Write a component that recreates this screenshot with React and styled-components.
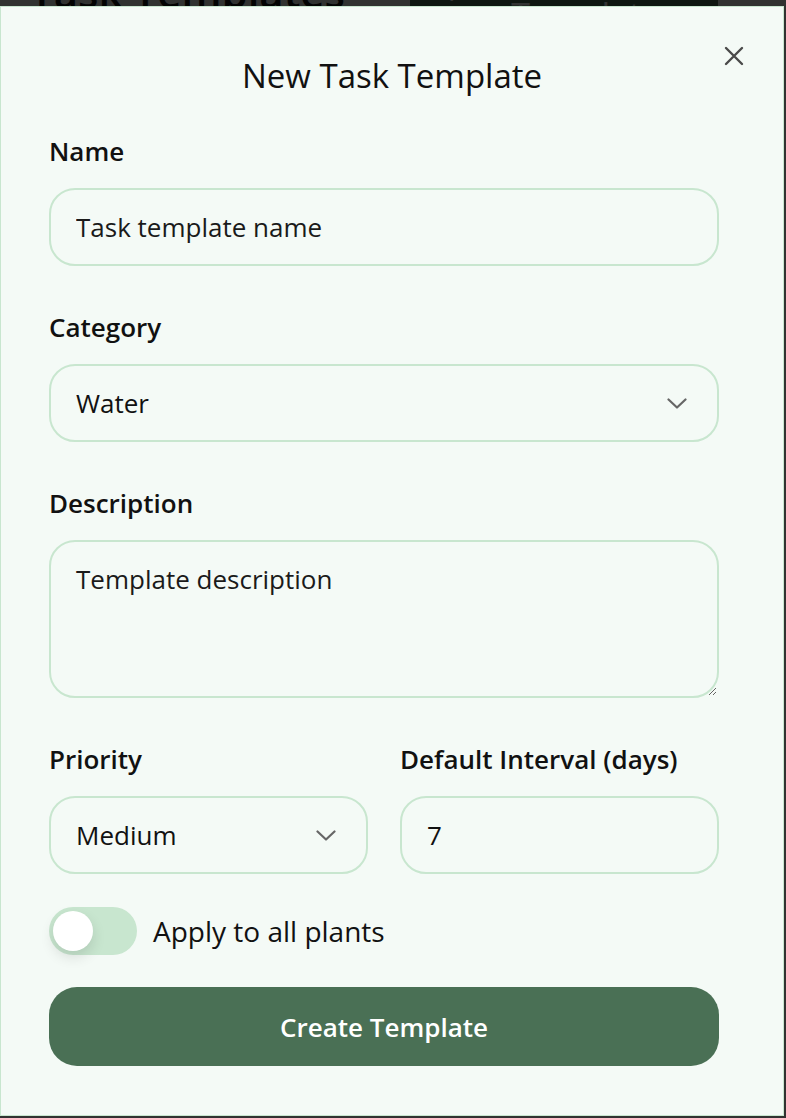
import React, { useState } from "react";
import styled, { createGlobalStyle } from "styled-components";

const GlobalStyle = createGlobalStyle`
  html, body {
    margin: 0;
    padding: 0;
    background: #f4faf6;
    font-family: "Open Sans", "Noto Sans", sans-serif;
    color: #111;
  }
  * { box-sizing: border-box; }
`;

const Page = styled.div`
  min-height: 1118px;
  padding: 0 68px 0 30px;
`;

const PageHeader = styled.header`
  display: flex;
  justify-content: space-between;
  align-items: center;
  margin-top: -44px;
`;

const PageTitle = styled.h1`
  margin: 0;
  font-size: 42px;
  font-weight: 600;
  line-height: 52px;
`;

const NewButton = styled.button`
  display: flex;
  align-items: center;
  gap: 24px;
  width: 308px;
  height: 72px;
  padding: 0 32px;
  border: 0;
  background: #4a7055;
  color: #fff;
  font: 500 34px "Open Sans", sans-serif;
`;

const Overlay = styled.div`
  position: fixed;
  inset: 0;
  background: rgba(0, 0, 0, 0.8);
  padding-top: 6px;
`;

const Modal = styled.div`
  position: relative;
  width: 784px;
  height: 1110px;
  background: #f4faf6;
  border: 1px solid #c8e6cf;
  padding: 47px 64px 0 48px;
`;

const CloseButton = styled.button`
  position: absolute;
  top: 38px;
  right: 38px;
  width: 22px;
  height: 22px;
  padding: 0;
  border: 0;
  background: none;
  display: flex;
  align-items: center;
  justify-content: center;
  cursor: pointer;
`;

const Title = styled.h2`
  margin: 0 -16px 35px 0;
  text-align: center;
  font-size: 33px;
  font-weight: 500;
  line-height: 44px;
`;

const Fields = styled.div`
  display: flex;
  flex-direction: column;
  gap: 43px;
`;

const Field = styled.label`
  display: flex;
  flex-direction: column;
  gap: 19px;
  min-width: 0;
`;

const Label = styled.span`
  font-size: 26px;
  font-weight: 600;
  line-height: 36px;
`;

const controlBase = `
  width: 100%;
  border: 2px solid #c8e6cf;
  border-radius: 26px;
  background: #f4faf6;
  color: #111;
  font-family: "Open Sans", "Noto Sans", sans-serif;
  font-size: 26px;
  outline: none;
  &::placeholder { color: #1a1a1a; opacity: 1; }
`;

const TextInput = styled.input`
  ${controlBase}
  height: 78px;
  padding: 0 25px;
`;

const TextArea = styled.textarea`
  ${controlBase}
  height: 158px;
  padding: 19px 25px;
  line-height: 36px;
  resize: vertical;
`;

const SelectWrap = styled.div`
  position: relative;
`;

const Select = styled.select`
  ${controlBase}
  height: 78px;
  padding: 0 60px 0 25px;
  appearance: none;
`;

const Chevron = styled.svg`
  position: absolute;
  right: ${(p) => p.$right}px;
  top: 34px;
  pointer-events: none;
`;

const Row = styled.div`
  display: grid;
  grid-template-columns: 1fr 1fr;
  gap: 32px;
`;

const ToggleRow = styled.label`
  display: flex;
  align-items: center;
  gap: 16px;
  margin-top: 33px;
  cursor: pointer;
`;

const Track = styled.span`
  position: relative;
  width: 88px;
  height: 48px;
  border-radius: 24px;
  background: #c8e6cf;
  flex-shrink: 0;
`;

const Knob = styled.span`
  position: absolute;
  top: 4px;
  left: ${(p) => (p.$on ? 44 : 4)}px;
  width: 40px;
  height: 40px;
  border-radius: 50%;
  background: #fff;
  box-shadow: 0 6px 14px rgba(0, 0, 0, 0.12);
`;

const ToggleText = styled.span`
  font-size: 28px;
  font-weight: 500;
  line-height: 36px;
`;

const SubmitButton = styled.button`
  width: 100%;
  height: 79px;
  margin-top: 32px;
  border: 0;
  border-radius: 28px;
  background: #4a7055;
  color: #fff;
  font-family: "Open Sans", "Noto Sans", sans-serif;
  font-size: 26px;
  font-weight: 600;
  cursor: pointer;
`;

const ChevronIcon = ({ right }) => (
  <Chevron $right={right} width="20" height="11" viewBox="0 0 20 11" fill="none">
    <path d="M1.5 1.5 L10 9.5 L18.5 1.5" stroke="#666" strokeWidth="2.2" strokeLinecap="round" strokeLinejoin="round" />
  </Chevron>
);

export default function App() {
  const [applyAll, setApplyAll] = useState(false);

  return (
    <>
      <GlobalStyle />
      <Page>
        <PageHeader>
          <PageTitle>Task Templates</PageTitle>
          <NewButton>
            <span>+</span>
            <span>New Template</span>
          </NewButton>
        </PageHeader>
      </Page>

      <Overlay>
        <Modal>
          <CloseButton aria-label="Close">
            <svg width="20" height="20" viewBox="0 0 20 20">
              <path d="M2 2 L18 18 M18 2 L2 18" stroke="#4a4a4a" strokeWidth="2.4" strokeLinecap="round" />
            </svg>
          </CloseButton>

          <Title>New Task Template</Title>

          <Fields>
            <Field>
              <Label>Name</Label>
              <TextInput placeholder="Task template name" />
            </Field>

            <Field>
              <Label>Category</Label>
              <SelectWrap>
                <Select defaultValue="water">
                  <option value="water">Water</option>
                  <option value="fertilize">Fertilize</option>
                  <option value="prune">Prune</option>
                  <option value="repot">Repot</option>
                </Select>
                <ChevronIcon right={32} />
              </SelectWrap>
            </Field>

            <Field>
              <Label>Description</Label>
              <TextArea placeholder="Template description" />
            </Field>

            <Row>
              <Field>
                <Label>Priority</Label>
                <SelectWrap>
                  <Select defaultValue="medium">
                    <option value="low">Low</option>
                    <option value="medium">Medium</option>
                    <option value="high">High</option>
                  </Select>
                  <ChevronIcon right={32} />
                </SelectWrap>
              </Field>
              <Field>
                <Label>Default Interval (days)</Label>
                <TextInput type="number" defaultValue={7} />
              </Field>
            </Row>
          </Fields>

          <ToggleRow onClick={() => setApplyAll((v) => !v)}>
            <Track>
              <Knob $on={applyAll} />
            </Track>
            <ToggleText>Apply to all plants</ToggleText>
          </ToggleRow>

          <SubmitButton type="button">Create Template</SubmitButton>
        </Modal>
      </Overlay>
    </>
  );
}
